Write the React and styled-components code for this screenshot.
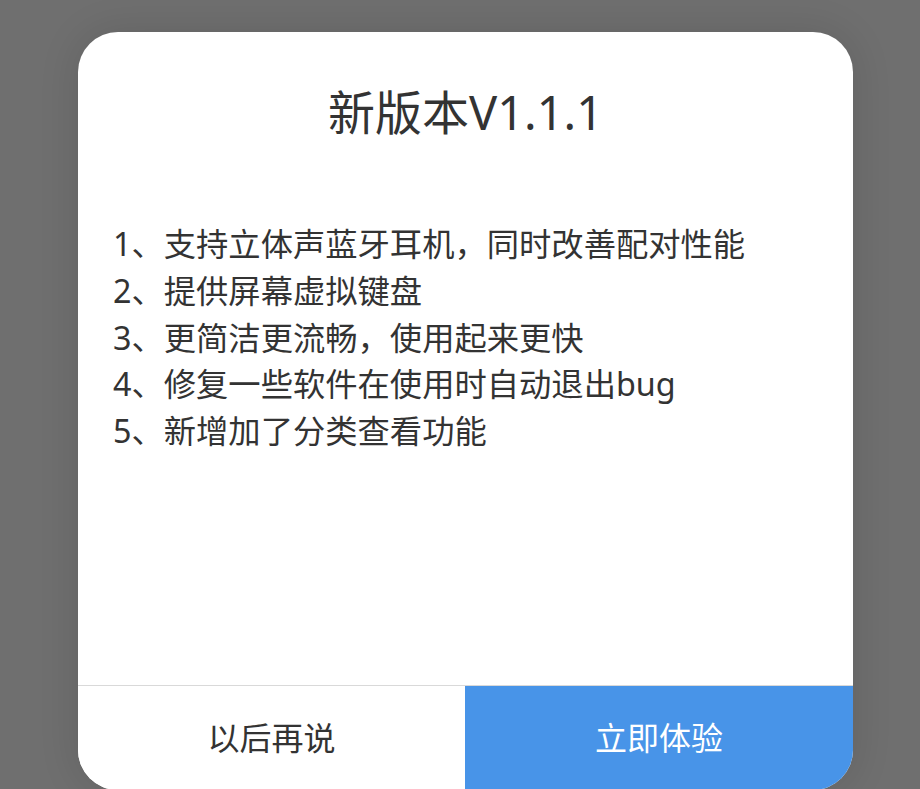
import React from "react";
import styled, { createGlobalStyle } from "styled-components";

const notes = [
  "1、支持立体声蓝牙耳机，同时改善配对性能",
  "2、提供屏幕虚拟键盘",
  "3、更简洁更流畅，使用起来更快",
  "4、修复一些软件在使用时自动退出bug",
  "5、新增加了分类查看功能",
];

function App() {
  return (
    <>
      <GlobalStyle />
      <Backdrop>
        <Dialog>
          <Title>新版本V1.1.1</Title>
          <NoteList>
            {notes.map((n) => (
              <Note key={n}>{n}</Note>
            ))}
          </NoteList>
          <Actions>
            <ActionButton>以后再说</ActionButton>
            <ActionButton primary>立即体验</ActionButton>
          </Actions>
        </Dialog>
      </Backdrop>
    </>
  );
}

export default App;

const GlobalStyle = createGlobalStyle`
  html, body {
    margin: 0;
    padding: 0;
    background: #6f6f6f;
    overflow: hidden;
  }
  * {
    box-sizing: border-box;
  }
`;

const Backdrop = styled.div`
  width: 920px;
  height: 789px;
  padding: 32px 0 0 78px;
  background: #6f6f6f;
  font-family: "Noto Sans", "Noto Sans CJK SC", sans-serif;
`;

const Dialog = styled.div`
  width: 775px;
  height: 758px;
  display: flex;
  flex-direction: column;
  background: #fff;
  border-radius: 40px;
  overflow: hidden;
  box-shadow: 0 0 40px rgba(0, 0, 0, 0.12);
`;

const Title = styled.h1`
  margin: 0;
  padding-top: 48px;
  font-size: 47px;
  font-weight: 400;
  line-height: 65px;
  color: #333;
  text-align: center;
`;

const NoteList = styled.div`
  flex: 1;
  padding: 75px 0 0 35px;
`;

const Note = styled.p`
  margin: 0;
  font-size: 32.3px;
  line-height: 46.75px;
  color: #333;
  white-space: nowrap;
`;

const Actions = styled.div`
  display: grid;
  grid-template-columns: 387px 1fr;
  height: 105px;
  border-top: 1px solid #d9d9d9;
`;

const ActionButton = styled.button`
  border: none;
  margin: 0;
  padding: 0 0 4px;
  font-family: inherit;
  font-size: 32px;
  background: ${(p) => (p.primary ? "#4894e8" : "#fff")};
  color: ${(p) => (p.primary ? "#fff" : "#333")};
  cursor: pointer;
`;
